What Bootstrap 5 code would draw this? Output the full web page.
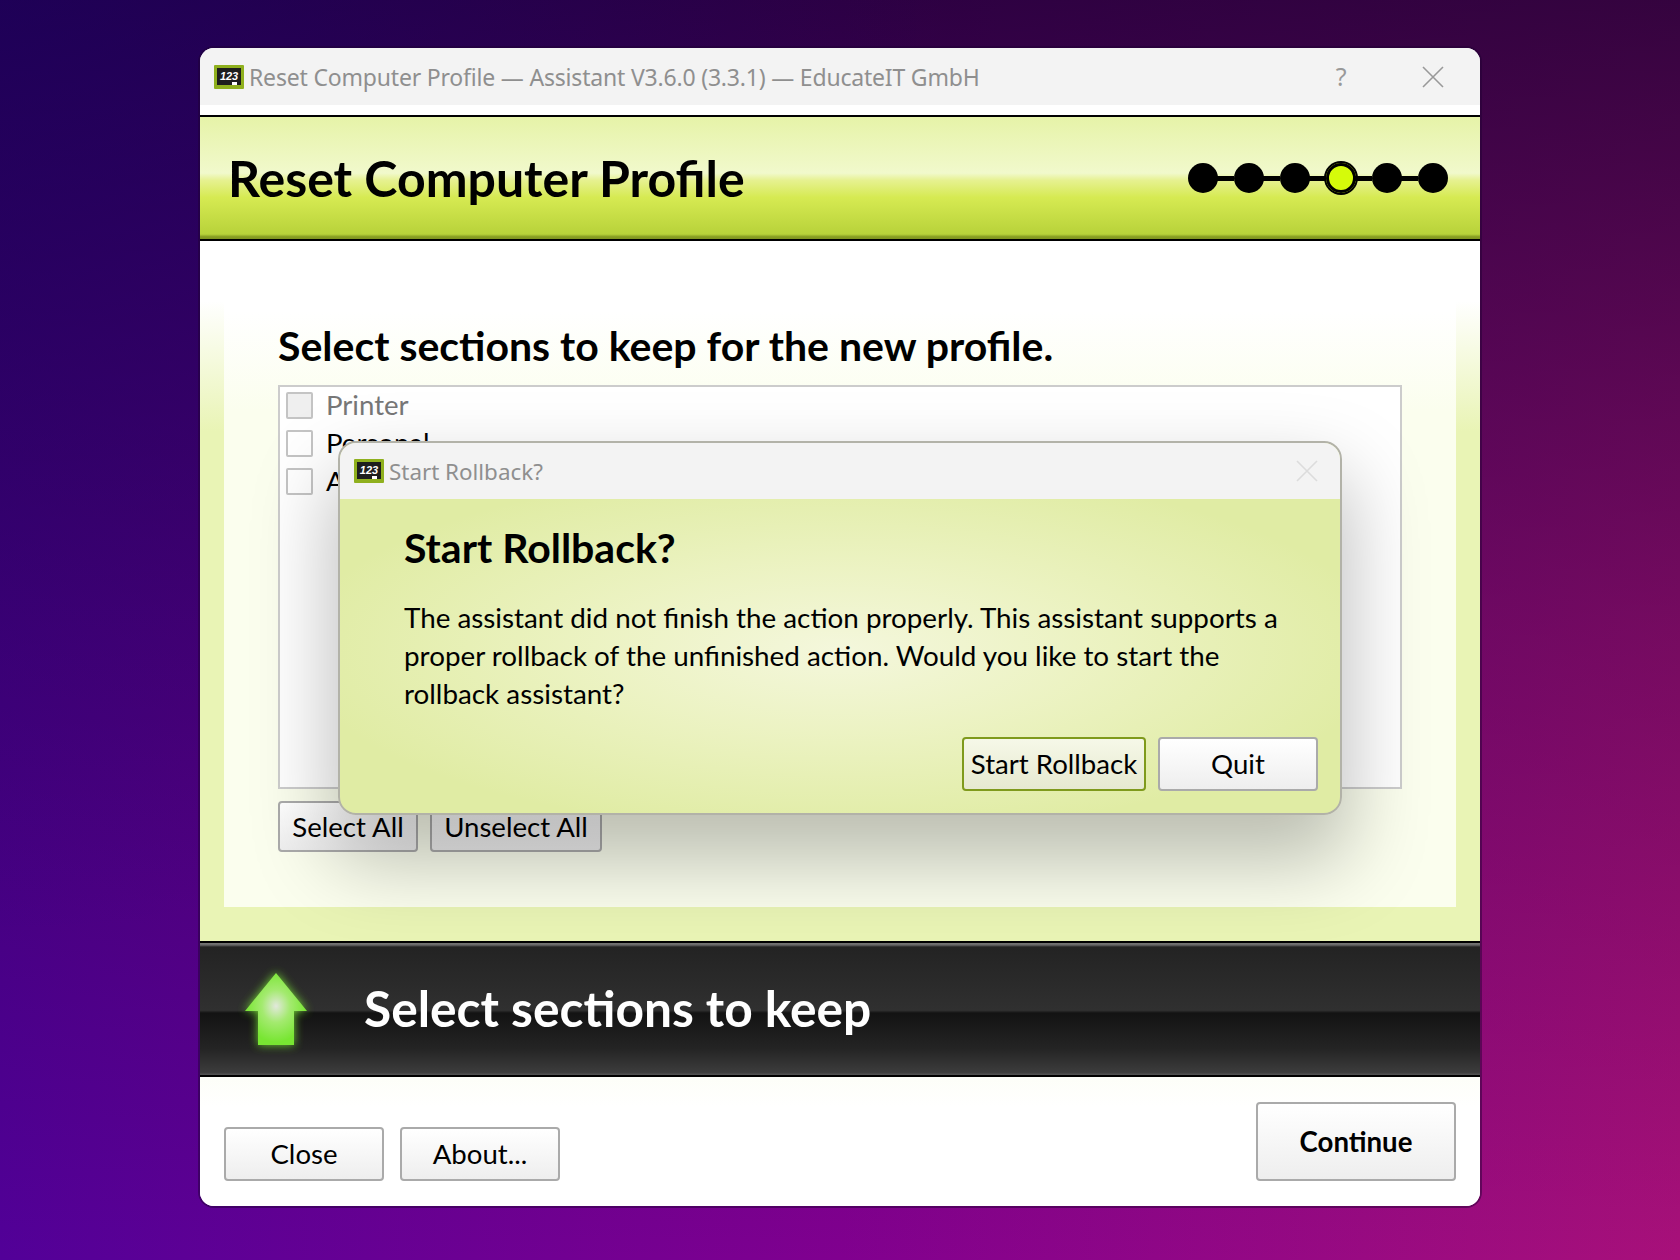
<!DOCTYPE html>
<html lang="en">
<head>
    <meta charset="UTF-8">
    <meta name="viewport" content="width=device-width, initial-scale=1.0">
    <title>Reset Computer Profile</title>
    <link href="https://cdn.jsdelivr.net/npm/bootstrap@5.3.2/dist/css/bootstrap.min.css" rel="stylesheet">
    <style>
        body {
            height: 1260px;
            margin: 0;
            padding-top: 48px;
            font-family: Lato, "Noto Sans", sans-serif;
            color: #000;
            background:
                radial-gradient(circle at 0 0, rgba(20,0,120,.35) 0, rgba(20,0,120,0) 45%),
                linear-gradient(180deg, rgba(24,0,48,.8) 0, rgba(24,0,48,.35) 50%, rgba(24,0,48,0) 100%),
                linear-gradient(90deg, #520098 0, #80008f 50%, #a8107a 100%);
            overflow: hidden;
        }
        .app-window {
            position: relative;
            width: 1280px;
            height: 1158px;
            margin: 0 auto;
            background: #fff;
            border-radius: 14px;
            overflow: hidden;
        }
        .app-frame {
            width: 1280px;
            margin: 0 auto;
            border-radius: 14px;
            box-shadow: 0 0 0 2px rgba(30,0,50,.45);
        }
        .title-bar {
            height: 57px;
            margin-bottom: 10px;
            padding: 0 36px 0 14px;
            background: #f3f3f3;
            color: #8f8f8f;
            font-family: "Noto Sans", sans-serif;
            font-size: 23px;
            letter-spacing: -.19px;
        }
        .bar-icon { width: 30px; height: 24px; margin-right: 5px; flex: none; }
        .bar-text { padding-top: 2px; }
        .bar-help { width: 92px; text-align: center; margin-right: 35px; font-size: 25px; color: #999; }
        .bar-close { width: 22px; height: 22px; flex: none; }
        .head-band {
            height: 126px;
            padding: 0 32px 0 28px;
            border-top: 2px solid #000;
            border-bottom: 2px solid #000;
            background: linear-gradient(180deg, #e6f3a8 0, #f1f9cc 46%, #e6f190 52%, #d6ea52 66%, #b8d23a 96%, #8aa024 98%, #7f9420 100%);
        }
        .head-title { font-size: 50px; font-weight: 700; margin: 0; line-height: 1; }
        .step-line { gap: 16px; }
        .step-dot { width: 30px; height: 30px; border-radius: 50%; background: #000; flex: none; position: relative; }
        .step-dot + .step-dot::before {
            content: "";
            position: absolute;
            left: -18px;
            top: 13px;
            width: 18px;
            height: 5px;
            background: #000;
        }
        .step-now { background: #d5fb0a; box-shadow: 0 0 0 2px #000, inset 0 0 0 3px #000; }
        .stage {
            height: 700px;
            padding: 0 24px 34px;
            background: linear-gradient(180deg, #fff 0, #fff 60px, #e9f4b5 190px);
        }
        .inner-panel {
            padding: 80px 54px 0;
            background: linear-gradient(180deg, #fff 0, #fff 70px, #fbfeee 170px);
        }
        .panel-head { font-size: 41px; font-weight: 700; line-height: 50px; margin: 0 0 14px; }
        .section-box {
            height: 404px;
            border: 2px solid #ccc;
            background: #fff;
            padding: 0 6px;
        }
        .section-row { height: 38px; font-size: 27.6px; line-height: 38px; padding: 0; margin: 0; }
        .section-row:first-child { margin-top: -1px; }
        .section-row .form-check-input {
            width: 27px;
            height: 27px;
            margin: 0 13px 0 0;
            float: none;
            flex: none;
            border: 2px solid #c4c4c4;
            border-radius: 2px;
        }
        .section-row .form-check-input:disabled { background: #efefef; opacity: 1; }
        .section-row .form-check-input:disabled ~ .section-off { opacity: 1; color: #777; }
        .win-btn {
            height: 54px;
            padding: 0;
            color: #000;
            font-size: 27.6px;
            line-height: 1;
            border: 2px solid #aaa;
            border-radius: 4px;
            background: linear-gradient(180deg, #fff 0, #eeeeee 100%);
        }
        .btn-wide { width: 160px; }
        .btn-small { height: 51px; }
        .btn-select { width: 140px; }
        .btn-unselect { width: 172px; }
        .btn-go { width: 200px; height: 79px; font-weight: 700; }
        .btn-main { width: 184px; border-color: #7f9a1c; background: linear-gradient(180deg, #f6f8e8 0, #e6e9d0 100%); }
        .info-band {
            height: 136px;
            padding-left: 36px;
            border-top: 2px solid #000;
            border-bottom: 2px solid #000;
            background: linear-gradient(180deg, #777 0, #666 2px, #232323 4px, #303030 51%, #131313 53%, #242424 80%, #3c3c3c 98%, #555 100%);
        }
        .info-arrow { width: 80px; height: 92px; flex: none; margin-right: 48px; }
        .info-text { color: #fff; font-size: 49.7px; font-weight: 700; line-height: 1; margin: 0; }
        .foot-bar {
            height: 129px;
            padding: 0 24px 25px;
            background: linear-gradient(180deg, #fdfef8 0, #fff 30px);
        }
        .ask-box {
            position: absolute;
            left: 138px;
            top: 393px;
            width: 1004px;
            height: 374px;
            border: 2px solid #b2b2a8;
            border-radius: 18px;
            overflow: hidden;
            background:
                radial-gradient(ellipse 55% 50% at 50% 56%, #f4f7dc 0, rgba(240,245,205,.75) 45%, rgba(224,236,164,0) 100%),
                #e0eca4;
        }
        .ask-shadow {
            position: absolute;
            left: 138px;
            top: 393px;
            width: 1004px;
            height: 374px;
            border-radius: 18px;
            box-shadow: 0 40px 80px 6px rgba(0,0,0,.26);
        }
        .ask-title-bar {
            height: 56px;
            padding: 0 22px 0 14px;
            background: #f3f3f3;
            color: #8f8f8f;
            font-family: "Noto Sans", sans-serif;
            font-size: 22.4px;
        }
        .ask-body { padding: 0 22px 0 64px; height: 316px; }
        .ask-head { font-size: 41px; font-weight: 700; line-height: 50px; margin: 24px 0 26px; }
        .ask-text { font-size: 27.8px; line-height: 38px; margin: 0; padding-right: 32px; }
        .ask-btns { margin-top: 24px; gap: 12px; }
    </style>
</head>
<body>
    <div class="app-frame">
        <div class="app-window">
            <div class="title-bar d-flex align-items-center">
                <svg class="bar-icon" viewBox="0 0 30 24">
                    <rect width="30" height="24" rx="1" fill="#8fb01e"/>
                    <rect x="3" y="3" width="24" height="17" fill="#1e1e1e"/>
                    <text x="15" y="14.5" font-family="Liberation Sans" font-size="11" font-weight="700" font-style="italic" fill="#fff" text-anchor="middle">123</text>
                    <rect x="18" y="17" width="5" height="3" fill="#fff"/>
                </svg>
                <span class="bar-text flex-grow-1">Reset Computer Profile — Assistant V3.6.0 (3.3.1) — EducateIT GmbH</span>
                <span class="bar-help">?</span>
                <svg class="bar-close" viewBox="0 0 22 22"><path d="M1 1 21 21M21 1 1 21" stroke="#999" stroke-width="1.6" fill="none"/></svg>
            </div>

            <div class="head-band d-flex align-items-center justify-content-between">
                <h1 class="head-title">Reset Computer Profile</h1>
                <div class="step-line d-flex align-items-center">
                    <div class="step-dot"></div>
                    <div class="step-dot"></div>
                    <div class="step-dot"></div>
                    <div class="step-dot step-now"></div>
                    <div class="step-dot"></div>
                    <div class="step-dot"></div>
                </div>
            </div>

            <div class="stage d-flex flex-column">
                <div class="inner-panel flex-grow-1">
                    <h2 class="panel-head">Select sections to keep for the new profile.</h2>
                    <div class="section-box">
                        <div class="form-check section-row d-flex align-items-center">
                            <input class="form-check-input" type="checkbox" disabled>
                            <label class="form-check-label section-off">Printer</label>
                        </div>
                        <div class="form-check section-row d-flex align-items-center">
                            <input class="form-check-input" type="checkbox">
                            <label class="form-check-label">Personal</label>
                        </div>
                        <div class="form-check section-row d-flex align-items-center">
                            <input class="form-check-input" type="checkbox">
                            <label class="form-check-label">Applications</label>
                        </div>
                    </div>
                    <div class="d-flex mt-2 pt-1 gap-2">
                        <button class="btn win-btn btn-small btn-select me-1">Select All</button>
                        <button class="btn win-btn btn-small btn-unselect">Unselect All</button>
                    </div>
                </div>
            </div>

            <div class="info-band d-flex align-items-center">
                <svg class="info-arrow" viewBox="0 0 80 92">
                    <defs>
                        <radialGradient id="arrowFill" cx="50%" cy="46%" r="50%">
                            <stop offset="0" stop-color="#e2e8dc"/>
                            <stop offset=".45" stop-color="#a4ea70"/>
                            <stop offset="1" stop-color="#78e632"/>
                        </radialGradient>
                        <filter id="arrowGlow" x="-30%" y="-30%" width="160%" height="160%">
                            <feGaussianBlur stdDeviation="5"/>
                        </filter>
                    </defs>
                    <path d="M40 10 71 48H58V82H22V48H9Z" fill="#78e632" opacity=".9" filter="url(#arrowGlow)"/>
                    <path d="M40 10 71 48H58V82H22V48H9Z" fill="url(#arrowFill)"/>
                </svg>
                <p class="info-text">Select sections to keep</p>
            </div>

            <div class="foot-bar d-flex align-items-end justify-content-between">
                <div class="d-flex gap-3">
                    <button class="btn win-btn btn-wide">Close</button>
                    <button class="btn win-btn btn-wide">About...</button>
                </div>
                <button class="btn win-btn btn-go">Continue</button>
            </div>

            <div class="ask-shadow"></div>
            <div class="ask-box">
                <div class="ask-title-bar d-flex align-items-center">
                    <svg class="bar-icon" viewBox="0 0 30 24">
                        <rect width="30" height="24" rx="1" fill="#8fb01e"/>
                        <rect x="3" y="3" width="24" height="17" fill="#1e1e1e"/>
                        <text x="15" y="14.5" font-family="Liberation Sans" font-size="11" font-weight="700" font-style="italic" fill="#fff" text-anchor="middle">123</text>
                        <rect x="18" y="17" width="5" height="3" fill="#fff"/>
                    </svg>
                    <span class="bar-text flex-grow-1">Start Rollback?</span>
                    <svg class="bar-close" viewBox="0 0 22 22"><path d="M1 1 21 21M21 1 1 21" stroke="#dcdcdc" stroke-width="1.6" fill="none"/></svg>
                </div>
                <div class="ask-body">
                    <h3 class="ask-head">Start Rollback?</h3>
                    <p class="ask-text">The assistant did not finish the action properly. This assistant supports a proper rollback of the unfinished action. Would you like to start the rollback assistant?</p>
                    <div class="ask-btns d-flex justify-content-end">
                        <button class="btn win-btn btn-main">Start Rollback</button>
                        <button class="btn win-btn btn-wide">Quit</button>
                    </div>
                </div>
            </div>
        </div>
    </div>
    <script src="https://cdn.jsdelivr.net/npm/bootstrap@5.3.2/dist/js/bootstrap.bundle.min.js"></script>
</body>
</html>
